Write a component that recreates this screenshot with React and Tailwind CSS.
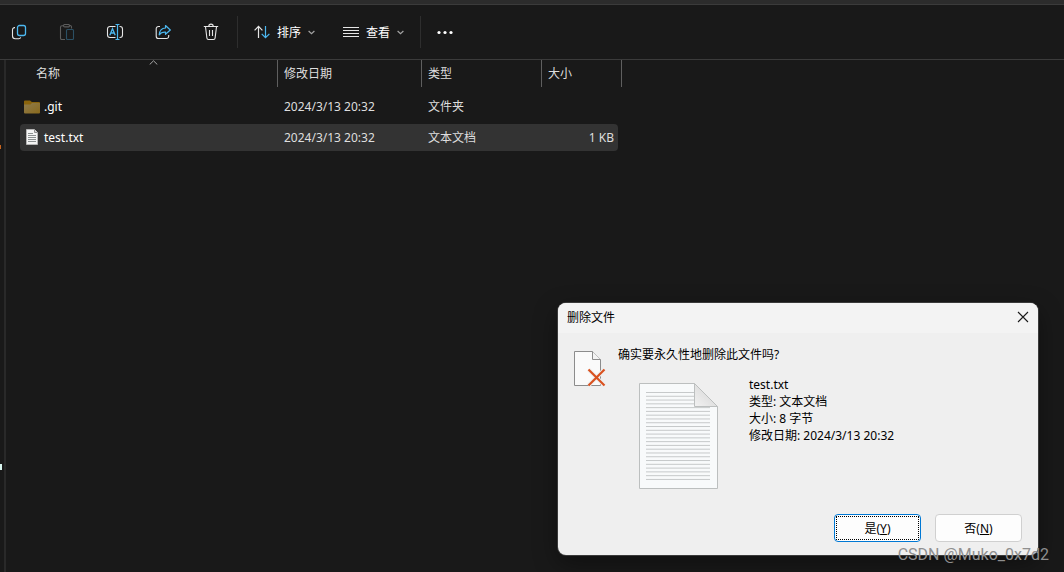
import React from 'react';

const files = [
    { name: '.git', date: '2024/3/13 20:32', type: '文件夹', size: '', kind: 'folder', selected: false },
    { name: 'test.txt', date: '2024/3/13 20:32', type: '文本文档', size: '1 KB', kind: 'text', selected: true },
];

const docLines = Array.from({ length: 24 }, (_, i) => 9.5 + i * 3.78);

function CopyIcon() {
    return (
        <svg width="16" height="16" viewBox="0 0 16 16" fill="none" strokeWidth="1.1">
            <path d="M4 3.6H3.2A2.2 2.2 0 0 0 1.5 5.8V12a2.7 2.7 0 0 0 2.7 2.7h3.6a2 2 0 0 0 1.9-1.3" stroke="#e6e6e6" />
            <rect x="6.5" y="1.5" width="8" height="10" rx="2" stroke="#4cb8f0" strokeWidth="1.3" />
        </svg>
    );
}

function PasteIcon() {
    return (
        <svg width="16" height="16" viewBox="0 0 16 16" fill="none" strokeWidth="1.1">
            <path d="M4.5 1.7H3A1.5 1.5 0 0 0 1.5 3.2v11A1.3 1.3 0 0 0 2.8 15.5H6M10.5 1.7a1.4 1.4 0 0 1 2 1.2v1.6" stroke="#5c5c5c" />
            <rect x="4.5" y="0.5" width="6" height="2.4" rx="1.2" stroke="#5c5c5c" />
            <rect x="7.5" y="5.5" width="7" height="10" rx="1" stroke="#2b4f63" />
        </svg>
    );
}

function RenameIcon() {
    return (
        <svg width="18" height="16" viewBox="0 0 18 16" fill="none" strokeWidth="1.1">
            <path d="M9.5 2.5H4A2.5 2.5 0 0 0 1.5 5v6A2.5 2.5 0 0 0 4 13.5h5.500M13.500 2.500h.5A2.5 2.5 0 0 1 16.500 5v6a2.500 2.500 0 0 1-2.500 2.500h-.5" stroke="#e6e6e6" />
            <path d="M11.500 .5v15M9.500 .5h4M9.500 15.500h4" stroke="#4cb8f0" strokeWidth="1.2" />
            <path d="M3.800 11.200 6.500 4.700l2.700 6.500M4.800 9h3.500" stroke="#4cb8f0" strokeWidth="1.3" />
        </svg>
    );
}

function ShareIcon() {
    return (
        <svg width="16" height="16" viewBox="0 0 16 16" fill="none" strokeWidth="1.1" strokeLinejoin="round">
            <path d="M5 2.5H3.5A2.3 2.3 0 0 0 1.2 4.8v7.4a2.3 2.3 0 0 0 2.3 2.3h7.9a2.3 2.3 0 0 0 2.3-2.3V11" stroke="#e6e6e6" />
            <path d="M10.5 1.5 15.3 6l-4.8 4.3V8.200C7.500 8 5.600 8.900 4.200 10.800 4.500 7 6.700 4.200 10.500 4z" stroke="#4cb8f0" strokeWidth="1.2" />
        </svg>
    );
}

function TrashIcon() {
    return (
        <svg width="16" height="18" viewBox="0 0 16 18" fill="none" stroke="#e6e6e6" strokeWidth="1.1">
            <path d="M.8 3.500h14.400M5.800 3.300a2.200 2.200 0 0 1 4.400 0M2.500 3.700l1.400 11.300a1.600 1.600 0 0 0 1.600 1.500h5a1.600 1.600 0 0 0 1.600-1.500l1.400-11.300M6.500 7v6M9.500 7v6" />
        </svg>
    );
}

function SortIcon() {
    return (
        <svg width="16" height="16" viewBox="0 0 16 16" fill="none" strokeWidth="1.2">
            <path d="M4.5 14V2.5M.6 6.300l3.900-4 3.900 4" stroke="#e6e6e6" />
            <path d="M11.500 2v11.500M7.700 9.800l3.800 3.900 3.900-3.900" stroke="#4cb8f0" />
        </svg>
    );
}

function ListIcon() {
    return (
        <svg width="16" height="16" viewBox="0 0 16 16" stroke="#e6e6e6">
            <path d="M0 3.500h16M0 6.500h16M0 9.500h16M0 12.500h16" />
        </svg>
    );
}

function Chevron() {
    return (
        <svg width="7" height="5" viewBox="0 0 7 5" fill="none" stroke="#a3a3a3" strokeWidth="1.2">
            <path d="M.6 1l2.900 2.700L6.400 1" />
        </svg>
    );
}

function FolderIcon() {
    return (
        <svg width="16" height="14" viewBox="0 0 16 14">
            <defs>
                <linearGradient id="folder" x1="0" y1="0" x2="1" y2="1">
                    <stop offset="0" stopColor="#8f7c4e" />
                    <stop offset="1" stopColor="#8a6a1c" />
                </linearGradient>
            </defs>
            <path d="M0 1.500A1 1 0 0 1 1 .5h5L7.800 2H15a1 1 0 0 1 1 1v4H0z" fill="#8a640c" />
            <path d="M0 4.500h6.500L8 3h8v9.500a1 1 0 0 1-1 1H1a1 1 0 0 1-1-1z" fill="url(#folder)" />
        </svg>
    );
}

function TextFileIcon() {
    return (
        <svg width="16" height="17" viewBox="0 0 16 17">
            <path d="M2.500.5h8l3 3v12h-11z" fill="#f4f4f4" stroke="#b5b5b5" />
            <path d="M10.500.5v3h3" fill="#d4d4d4" stroke="#8f8f8f" />
            <path d="M4 4.500h5M4 6.500h8M4 8.500h8M4 10.500h8M4 12.500h8" stroke="#8b9090" />
        </svg>
    );
}

function DeleteFileIcon() {
    return (
        <svg className="mt-[5px] shrink-0" width="32" height="36" viewBox="0 0 32 36">
            <path d="M.5.5h18l8 8v26H.5z" fill="#fafafa" stroke="#8c8c8c" />
            <path d="M18.500.5v8h8" fill="#f3f3f3" stroke="#8c8c8c" />
            <path d="M14.500 18.500 30.500 34.500M30.500 18.500 14.500 34.500" fill="none" stroke="#efefef" strokeWidth="4" />
            <path d="M14.500 18.500 30.500 34.500M30.500 18.500 14.500 34.500" fill="none" stroke="#d9511f" strokeWidth="2.2" />
        </svg>
    );
}

function DocumentPreview() {
    return (
        <svg className="mt-[7px] shrink-0" width="79" height="106" viewBox="0 0 79 106">
            <defs>
                <linearGradient id="fold" x1="0" y1="1" x2="1" y2="0">
                    <stop offset="0" stopColor="#f2f2f2" />
                    <stop offset="1" stopColor="#cfcfcf" />
                </linearGradient>
            </defs>
            <path d="M.5.5h55l23 23v82H.5z" fill="#f8fafb" stroke="#bcbfbf" />
            {docLines.map((y) => (
                <path key={y} d={`M7 ${y}H${y < 24 ? 55 : 71}`} stroke="#c6c9ca" />
            ))}
            <path d="M55.500.5v23h23z" fill="url(#fold)" stroke="#bcbfbf" />
        </svg>
    );
}

function ToolButton({ label, disabled, children }) {
    return (
        <button type="button" aria-label={label} disabled={disabled} className="flex h-8 w-8 items-center justify-center rounded">
            {children}
        </button>
    );
}

function MenuButton({ icon, label }) {
    return (
        <button type="button" className="flex h-8 items-center gap-[7px] rounded px-2 text-white">
            {icon}
            <span>{label}</span>
            <Chevron />
        </button>
    );
}

function Toolbar() {
    return (
        <header className="flex h-[55px] items-center border-b border-[#3b3b3b] pl-[3px]">
            <div className="flex gap-4">
                <ToolButton label="复制"><CopyIcon /></ToolButton>
                <ToolButton label="粘贴" disabled><PasteIcon /></ToolButton>
                <ToolButton label="重命名"><RenameIcon /></ToolButton>
                <ToolButton label="共享"><ShareIcon /></ToolButton>
                <ToolButton label="删除"><TrashIcon /></ToolButton>
            </div>
            <div className="mr-2 ml-[10px] h-8 w-px bg-[#2e2e2e]" />
            <div className="flex gap-3">
                <MenuButton icon={<SortIcon />} label="排序" />
                <MenuButton icon={<ListIcon />} label="查看" />
            </div>
            <div className="mx-2 h-8 w-px bg-[#2e2e2e]" />
            <ToolButton label="更多">
                <svg width="16" height="16" viewBox="0 0 16 16" fill="#ffffff">
                    <circle cx="2" cy="8.500" r="1.600" />
                    <circle cx="8" cy="8.500" r="1.600" />
                    <circle cx="14" cy="8.500" r="1.600" />
                </svg>
            </ToolButton>
        </header>
    );
}

function HeaderCell({ label, width, indent, sorted }) {
    return (
        <th scope="col" className={`h-[29px] p-0 text-left align-top font-normal ${width}`}>
            <div className={`relative flex h-[27px] items-center border-r border-[#5f5f5f] ${indent}`}>
                {label}
                {sorted && (
                    <svg className="absolute top-0 left-1/2" width="9" height="5" viewBox="0 0 9 5" fill="none" stroke="#a8a8a8">
                        <path d="M.7 4.500l3.800-3.700 3.800 3.700" />
                    </svg>
                )}
            </div>
        </th>
    );
}

function FileTable() {
    return (
        <table className="w-[602px] table-fixed border-separate border-spacing-0 text-[#dedede]">
            <thead>
                <tr>
                    <HeaderCell label="名称" width="w-[258px]" indent="pl-4" sorted />
                    <HeaderCell label="修改日期" width="w-[144px]" indent="pl-[6px]" />
                    <HeaderCell label="类型" width="w-[120px]" indent="pl-[6px]" />
                    <HeaderCell label="大小" width="w-[80px]" indent="pl-[6px]" />
                </tr>
            </thead>
            <tbody>
                {files.map((file) => {
                    const bg = file.selected ? 'bg-[#333333]' : '';
                    return (
                        <tr key={file.name}>
                            <td className="p-0 pt-1">
                                <div className={`flex h-[27px] items-center gap-1 rounded-l-sm pl-1 text-white ${bg}`}>
                                    {file.kind === 'folder' ? <FolderIcon /> : <TextFileIcon />}
                                    {file.name}
                                </div>
                            </td>
                            <td className="p-0 pt-1">
                                <div className={`flex h-[27px] items-center pl-[6px] ${bg}`}>{file.date}</div>
                            </td>
                            <td className="p-0 pt-1">
                                <div className={`flex h-[27px] items-center pl-[6px] ${bg}`}>{file.type}</div>
                            </td>
                            <td className="p-0 pt-1 pr-1">
                                <div className={`flex h-[27px] items-center justify-end rounded-r-sm pr-1 ${bg}`}>{file.size}</div>
                            </td>
                        </tr>
                    );
                })}
            </tbody>
        </table>
    );
}

function DeleteDialog() {
    return (
        <div
            role="dialog"
            aria-labelledby="dialog-title"
            className="absolute right-[26px] bottom-[17px] w-[480px] overflow-hidden rounded-lg bg-[#efefef] text-black shadow-[0_0_0_1px_#3a3a3a,0_8px_24px_rgba(0,0,0,0.4)]"
        >
            <div className="flex h-[30px] items-center justify-between bg-[#f3f3f3] px-[9px] pb-[2px]">
                <h1 id="dialog-title">删除文件</h1>
                <button type="button" aria-label="关闭">
                    <svg width="12" height="12" viewBox="0 0 12 12" stroke="#1a1a1a" strokeWidth="1.1">
                        <path d="M1 1l10 10M11 1L1 11" />
                    </svg>
                </button>
            </div>
            <div className="px-4 pt-[13px] pb-[13px]">
                <div className="flex items-start gap-3">
                    <DeleteFileIcon />
                    <div>
                        <p>确实要永久性地删除此文件吗?</p>
                        <div className="mt-[13px] flex items-start gap-[31px] pl-[21px]">
                            <DocumentPreview />
                            <div>
                                <p>test.txt</p>
                                <p>类型: 文本文档</p>
                                <p>大小: 8 字节</p>
                                <p>修改日期: 2024/3/13 20:32</p>
                            </div>
                        </div>
                    </div>
                </div>
                <div className="mt-[25px] flex justify-end gap-3.5">
                    <button type="button" className="h-7 w-[87px] rounded border border-[#0078d4] bg-[#fdfdfd] p-px">
                        <span className="flex h-full items-center justify-center border border-dotted border-black">
                            是(<u>Y</u>)
                        </span>
                    </button>
                    <button type="button" className="h-7 w-[87px] rounded border border-[#d0d0d0] bg-[#fdfdfd]">
                        否(<u>N</u>)
                    </button>
                </div>
            </div>
        </div>
    );
}

export default function App() {
    return (
        <div className="relative flex min-h-screen flex-col overflow-hidden bg-[#191919] font-['Noto_Sans','Noto_Sans_CJK_SC',sans-serif] text-[12px] leading-[17px]">
            <div className="h-[5px] border-b border-[#3b3b3b] bg-[#2c2c2c]" />
            <Toolbar />
            <main className="flex flex-1">
                {/* edge of the navigation pane */}
                <div className="flex w-[6px] flex-col border-r-2 border-[#292929]">
                    <div className="mt-[85px] h-1 w-px bg-[#c8641e]" />
                    <div className="mt-[315px] h-[6px] w-[2px] bg-[#d8f5ee]" />
                </div>
                <div className="pl-[14px]">
                    <FileTable />
                </div>
            </main>
            <DeleteDialog />
            <p className="absolute right-[15px] bottom-[7px] font-['Roboto',sans-serif] text-[16px] leading-5 text-[#8f8f8f]">
                CSDN @Muko_0x7d2
            </p>
        </div>
    );
}
